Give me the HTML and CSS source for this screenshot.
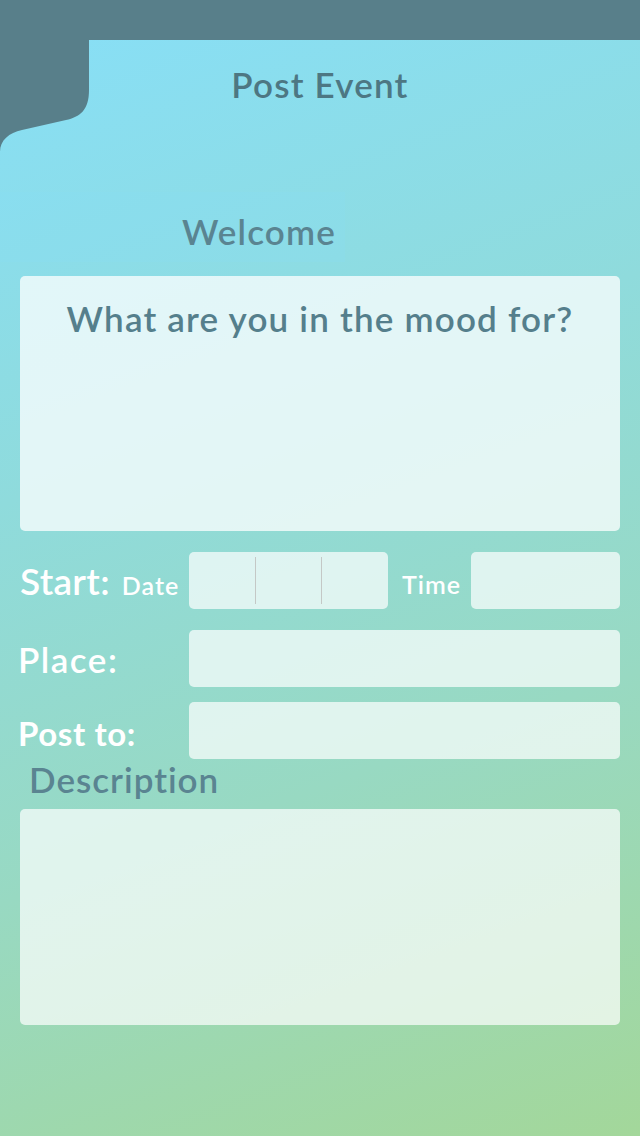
FILE: index.html
```html
<!DOCTYPE html>
<html>
<head>
<meta charset="utf-8">
<link rel="stylesheet" href="styles.css">
</head>
<body>
<div class="panel">
  <svg class="corner" width="90" height="112" viewBox="0 0 90 112" aria-hidden="true">
    <path d="M0 0 H89 V50 C89 70 80 77 66 80 L22 90 C9 93 0 100 0 112 Z" fill="#587f8a"/>
  </svg>
  <h1 class="title">Post Event</h1>
  <div class="welcome"><span>Welcome</span></div>
  <div class="mood">What are you in the mood for?</div>
  <div class="row row-start">
    <div class="label start-cell">
      <span class="label-big">Start:</span>
      <span class="label-small">Date</span>
    </div>
    <div class="field date">
      <span class="seg"></span><span class="seg"></span><span class="seg"></span>
    </div>
    <span class="label-small time-label">Time</span>
    <div class="field time"></div>
  </div>
  <div class="row row-place">
    <span class="label">Place:</span>
    <div class="field grow"></div>
  </div>
  <div class="row row-post">
    <span class="label label-post">Post to:</span>
    <div class="field grow"></div>
  </div>
  <div class="desc-label">Description</div>
  <div class="desc"></div>
</div>
</body>
</html>
```
FILE: styles.css
```css
html, body {
  margin: 0;
  padding: 0;
}
body {
  background: #587f8a;
  font-family: Lato, "Open Sans", sans-serif;
  width: 640px;
  height: 1136px;
  overflow: hidden;
}
.panel {
  position: relative;
  margin-top: 40px;
  height: 1096px;
  padding: 0 20px;
  box-sizing: border-box;
  background: linear-gradient(160deg, #88dff6 0%, #8fdbdc 35%, #98d9c2 65%, #a3d79a 100%);
}
.corner {
  position: absolute;
  left: 0;
  top: 0;
  display: block;
}
.title {
  margin: 0;
  padding-top: 22px;
  height: 62px;
  text-align: center;
  font-size: 35px;
  font-weight: 600;
  letter-spacing: 1.2px;
  line-height: 44px;
  color: #4d7783;
}
.welcome {
  margin: 68px 0 0 -20px;
  width: 345px;
  height: 70px;
  box-sizing: border-box;
  padding-left: 182px;
  padding-top: 19px;
  background: rgba(136, 223, 245, 0.22);
}
.welcome span {
  font-size: 35px;
  font-weight: 600;
  letter-spacing: 1.2px;
  line-height: 40px;
  color: #5a8491;
}
.mood {
  margin-top: 14px;
  height: 255px;
  border-radius: 5px;
  background: rgba(255, 255, 255, 0.75);
  text-align: center;
  font-size: 35px;
  font-weight: 600;
  letter-spacing: 1.2px;
  color: #557f8c;
  line-height: 40px;
  padding-top: 22px;
  box-sizing: border-box;
}
.row {
  display: flex;
  align-items: center;
  height: 57px;
  color: #fff;
}
.row-start {
  margin-top: 21px;
}
.row-place {
  margin-top: 21px;
}
.row-post {
  margin-top: 15px;
}
.label {
  width: 171px;
  margin-left: -2px;
  flex: none;
  font-size: 35px;
  font-weight: 600;
  letter-spacing: 1.5px;
}
.start-cell {
  margin-left: 0;
  width: 169px;
  display: flex;
  align-items: baseline;
  letter-spacing: 0;
}
.label-big {
  font-size: 37px;
  font-weight: 600;
  letter-spacing: 0.3px;
  margin-right: 12px;
}
.label-small {
  font-size: 25px;
  font-weight: 600;
  letter-spacing: 1px;
}
.time-label {
  margin: 6px 10px 0 14px;
}
.label-post {
  font-size: 33px;
  font-weight: 700;
  letter-spacing: 0.6px;
  margin-top: 4px;
}
.field {
  height: 57px;
  border-radius: 5px;
  background: rgba(255, 255, 255, 0.7);
}
.grow {
  flex: 1;
}
.date {
  width: 199px;
  display: flex;
  align-items: center;
}
.seg {
  flex: 1;
  height: 47px;
}
.seg + .seg {
  border-left: 1px solid #c4c8c6;
}
.time {
  flex: 1;
}
.desc-label {
  padding-left: 9px;
  height: 50px;
  font-size: 35px;
  font-weight: 600;
  letter-spacing: 1px;
  line-height: 40px;
  color: #5a8491;
}
.desc {
  height: 216px;
  border-radius: 5px;
  background: rgba(255, 255, 255, 0.7);
}
```
